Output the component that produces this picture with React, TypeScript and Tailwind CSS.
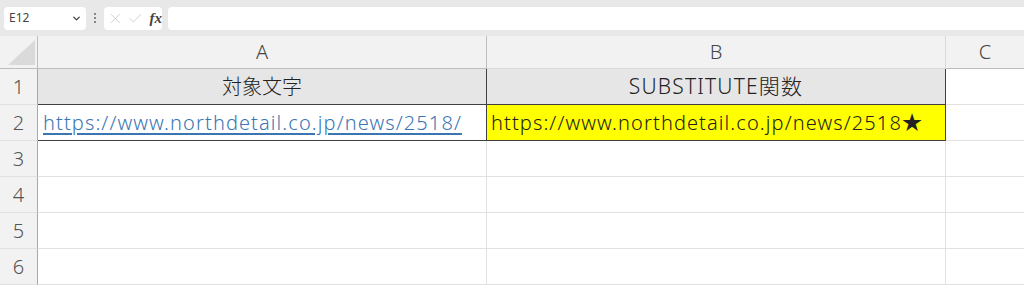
import { ChevronDown, X, Check } from "lucide-react";

const font = { fontFamily: '"Noto Sans", "Noto Sans CJK JP", sans-serif' };

const rows = [3, 4, 5, 6];

export default function App() {
  return (
    <div className="h-[290px] w-[1024px] overflow-hidden bg-white" style={font}>
      {/* formula bar */}
      <div className="flex h-[36px] items-center bg-[#e8e8e8] pl-[4px]">
        <div className="flex h-[23px] w-[82px] items-center justify-between rounded-[4px] bg-white pl-[5px] pr-[4px]">
          <span className="text-[12px] text-[#444]">E12</span>
          <ChevronDown size={11} strokeWidth={3} className="text-[#444]" />
        </div>
        <div className="flex w-[18px] flex-col items-center gap-[2px]">
          <span className="h-[2px] w-[2px] rounded-full bg-[#666]" />
          <span className="h-[2px] w-[2px] rounded-full bg-[#666]" />
          <span className="h-[2px] w-[2px] rounded-full bg-[#666]" />
        </div>
        <div className="flex h-[23px] w-[58px] items-center gap-[3px] rounded-[4px] bg-white pl-[3px]">
          <X size={17} strokeWidth={1.1} className="text-[#c4c4c4]" />
          <Check size={17} strokeWidth={1.1} className="text-[#c4c4c4]" />
          <span className="ml-[3px] text-[15px] font-bold italic text-[#444]" style={{ fontFamily: '"Liberation Serif", serif' }}>
            fx
          </span>
        </div>
        <div className="ml-[6px] h-[23px] flex-1 rounded-l-[4px] bg-white" />
      </div>

      {/* grid */}
      <div className="grid grid-cols-[38px_449px_459px_78px] grid-rows-[33px_36px_36px_36px_36px_36px_36px]">
        {/* column headers */}
        <div className="relative border-b border-r border-[#bdbdbd] bg-[#f2f2f2]">
          <svg className="absolute left-[8px] top-[4px]" width="27" height="25" viewBox="0 0 27 25">
            <polygon points="27,0 27,25 0,25" fill="#dadada" />
          </svg>
        </div>
        <div className="flex items-center justify-center border-b border-r border-[#bdbdbd] bg-[#f2f2f2] text-[20px] font-light text-[#444]">A</div>
        <div className="flex items-center justify-center border-b border-r border-[#dadada] bg-[#f2f2f2] text-[20px] font-light text-[#444]">B</div>
        <div className="flex items-center justify-center border-b border-[#bdbdbd] bg-[#f2f2f2] text-[20px] font-light text-[#444]">C</div>

        {/* row 1 */}
        <div className="flex items-center justify-center border-b border-r border-[#a8a8a8] border-b-[#e1e1e1] bg-[#f2f2f2] text-[20px] font-light text-[#555]">1</div>
        <div className="flex items-center justify-center border-b border-r border-[#404040] bg-[#e7e6e6] text-[20px] font-light text-[#222]">対象文字</div>
        <div className="flex items-center justify-center border-b border-r border-[#404040] bg-[#e7e6e6] text-[21px] font-light tracking-[1.2px] text-[#222]">SUBSTITUTE関数</div>
        <div className="border-b border-[#e1e1e1]" />

        {/* row 2 */}
        <div className="flex items-center justify-center border-b border-r border-[#a8a8a8] border-b-[#e1e1e1] bg-[#f2f2f2] text-[20px] font-light text-[#555]">2</div>
        <div className="flex items-center border-b border-r border-[#404040] bg-white pl-[5px] text-[20px] font-light tracking-[1.1px] text-[#3b76b3] underline underline-offset-[3px]">
          https://www.northdetail.co.jp/news/2518/
        </div>
        <div className="flex items-center border-b border-r border-[#404040] bg-[#ffff00] pl-[4px] text-[20px] font-light tracking-[1.1px] text-[#222]">
          https://www.northdetail.co.jp/news/2518★
        </div>
        <div className="border-b border-[#e1e1e1]" />

        {rows.map((r) => (
          <>
            <div key={`h${r}`} className="flex items-center justify-center border-b border-r border-[#a8a8a8] border-b-[#e1e1e1] bg-[#f2f2f2] text-[20px] font-light text-[#555]">
              {r}
            </div>
            <div key={`a${r}`} className="border-b border-r border-[#e1e1e1]" />
            <div key={`b${r}`} className="border-b border-r border-[#e1e1e1]" />
            <div key={`c${r}`} className="border-b border-[#e1e1e1]" />
          </>
        ))}
      </div>
    </div>
  );
}
